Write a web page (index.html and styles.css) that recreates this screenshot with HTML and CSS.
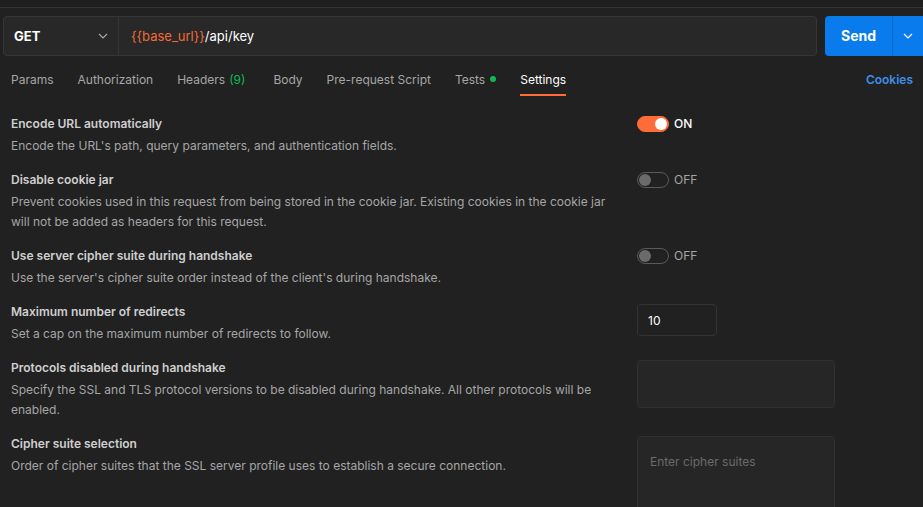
FILE: index.html
```html
<!DOCTYPE html>
<html>
<head>
<meta charset="utf-8">
<link rel="stylesheet" href="styles.css">
</head>
<body>
<div class="app">
  <div class="topline"></div>
  <div class="urlrow">
    <div class="urlbar">
      <div class="method">
        <span class="method-name">GET</span>
        <svg class="chev" width="10" height="6" viewBox="0 0 10 6"><path d="M1 1l4 4 4-4" fill="none" stroke="#a6a6a6" stroke-width="1.2"/></svg>
      </div>
      <div class="url"><span class="var">{{base_url}}</span>/api/key</div>
    </div>
    <div class="send">
      <span class="send-label">Send</span>
      <span class="send-arrow"><svg width="10" height="6" viewBox="0 0 10 6"><path d="M1 1l4 4 4-4" fill="none" stroke="#ffffff" stroke-width="1.2"/></svg></span>
    </div>
  </div>
  <div class="tabs">
    <div class="tab">Params</div>
    <div class="tab">Authorization</div>
    <div class="tab tab-headers">Headers <span class="count">(9)</span></div>
    <div class="tab">Body</div>
    <div class="tab">Pre-request Script</div>
    <div class="tab">Tests <span class="dot"></span></div>
    <div class="tab active">Settings</div>
    <div class="spacer"></div>
    <div class="cookies">Cookies</div>
  </div>
  <div class="settings">
    <div class="row">
      <div class="info">
        <div class="title">Encode URL automatically</div>
        <div class="desc">Encode the URL's path, query parameters, and authentication fields.</div>
      </div>
      <div class="control"><span class="toggle on"><span class="knob"></span></span><span class="tlabel on">ON</span></div>
    </div>
    <div class="row">
      <div class="info">
        <div class="title">Disable cookie jar</div>
        <div class="desc">Prevent cookies used in this request from being stored in the cookie jar. Existing cookies in the cookie jar will not be added as headers for this request.</div>
      </div>
      <div class="control"><span class="toggle"><span class="knob"></span></span><span class="tlabel">OFF</span></div>
    </div>
    <div class="row">
      <div class="info">
        <div class="title">Use server cipher suite during handshake</div>
        <div class="desc">Use the server's cipher suite order instead of the client's during handshake.</div>
      </div>
      <div class="control"><span class="toggle"><span class="knob"></span></span><span class="tlabel">OFF</span></div>
    </div>
    <div class="row">
      <div class="info">
        <div class="title">Maximum number of redirects</div>
        <div class="desc">Set a cap on the maximum number of redirects to follow.</div>
      </div>
      <div class="control"><div class="numbox">10</div></div>
    </div>
    <div class="row">
      <div class="info">
        <div class="title">Protocols disabled during handshake</div>
        <div class="desc">Specify the SSL and TLS protocol versions to be disabled during handshake. All other protocols will be enabled.</div>
      </div>
      <div class="control"><div class="selectbox"></div></div>
    </div>
    <div class="row">
      <div class="info">
        <div class="title">Cipher suite selection</div>
        <div class="desc">Order of cipher suites that the SSL server profile uses to establish a secure connection.</div>
      </div>
      <div class="control"><div class="cipherbox"><span class="placeholder">Enter cipher suites</span></div></div>
    </div>
  </div>
</div>
</body>
</html>
```
FILE: styles.css
```css
html, body {
  margin: 0;
  padding: 0;
  background: #212121;
  overflow: hidden;
}
body {
  font-family: Inter, "Noto Sans", sans-serif;
  color: #a6a6a6;
  width: 923px;
  height: 507px;
}
.app {
  display: flex;
  flex-direction: column;
}
.topline {
  height: 7px;
  border-bottom: 1px solid #333333;
  background: #1f1f1f;
}
.urlrow {
  display: flex;
  margin-top: 8px;
  padding-left: 3px;
  gap: 8px;
}
.urlbar {
  flex: 0 0 812px;
  height: 38px;
  display: flex;
  background: #282828;
  border: 1px solid #363636;
  border-radius: 4px;
  box-sizing: content-box;
}
.method {
  padding-left: 10px;
  display: flex;
  align-items: center;
  justify-content: space-between;
  padding-right: 10px;
  border-right: 1px solid #363636;
  box-sizing: border-box;
  flex: 0 0 115px;
}
.method-name {
  color: #ffffff;
  font-weight: 700;
  font-size: 13px;
}
.url {
  display: flex;
  align-items: center;
  padding-left: 12px;
  font-size: 13px;
  color: #ffffff;
}
.var {
  color: #f26b3a;
}
.send {
  flex: 1;
  height: 40px;
  background: #097bed;
  border-radius: 4px 0 0 4px;
  display: flex;
  align-items: center;
}
.send-label {
  width: 67px;
  text-align: center;
  color: #ffffff;
  font-weight: 700;
  font-size: 14px;
  border-right: 1px solid #0a6bd0;
  height: 40px;
  line-height: 40px;
}
.send-arrow {
  width: 30px;
  display: flex;
  justify-content: center;
}
.tabs {
  display: flex;
  align-items: stretch;
  height: 40px;
  padding-left: 11px;
  padding-right: 10px;
  gap: 24px;
  font-size: 12px;
}
.tab {
  display: flex;
  align-items: center;
  color: #a6a6a6;
  border-bottom: 2px solid transparent;
  padding-top: 8px;
}
.tab-headers {
  margin-right: 4px;
}
.count {
  color: #0cbb52;
  margin-left: 4px;
}
.dot {
  width: 6px;
  height: 6px;
  border-radius: 50%;
  background: #0cbb52;
  margin-left: 5px;
}
.tab.active {
  color: #ffffff;
  border-bottom-color: #ff6c37;
}
.spacer {
  flex: 1;
}
.cookies {
  display: flex;
  align-items: center;
  padding-top: 8px;
  padding-bottom: 2px;
  color: #3d8fe8;
  font-weight: 600;
}
.settings {
  padding: 18px 0 0 11px;
  display: flex;
  flex-direction: column;
  gap: 14px;
}
.row {
  display: flex;
  gap: 24px;
}
.info {
  flex: 0 0 602px;
}
.title {
  font-size: 12px;
  font-weight: 600;
  color: #cfcfcf;
  line-height: 20px;
  margin-bottom: 2px;
}
.desc {
  font-size: 12px;
  line-height: 20px;
  color: #a6a6a6;
}
.control {
  display: flex;
  align-items: flex-start;
  padding-top: 2px;
}
.toggle {
  width: 32px;
  height: 16px;
  border-radius: 8px;
  box-sizing: border-box;
  border: 1px solid #5a5a5a;
  position: relative;
}
.toggle .knob {
  position: absolute;
  top: 1px;
  left: 1px;
  width: 12px;
  height: 12px;
  border-radius: 50%;
  background: #6b6b6b;
}
.toggle.on {
  background: #ff6c37;
  border-color: #ff6c37;
}
.toggle.on .knob {
  left: auto;
  right: 1px;
  background: #ffffff;
}
.tlabel {
  margin-left: 5px;
  font-size: 12px;
  line-height: 16px;
  color: #a6a6a6;
}
.tlabel.on {
  color: #ffffff;
  font-weight: 500;
}
.numbox {
  width: 80px;
  height: 32px;
  box-sizing: border-box;
  border: 1px solid #333333;
  border-radius: 4px;
  padding-left: 10px;
  font-size: 12px;
  color: #ffffff;
  line-height: 32px;
}
.selectbox {
  width: 198px;
  height: 48px;
  box-sizing: border-box;
  background: #262626;
  border: 1px solid #303030;
  border-radius: 4px;
}
.cipherbox {
  width: 198px;
  height: 90px;
  box-sizing: border-box;
  background: #262626;
  border: 1px solid #303030;
  border-radius: 4px;
  padding: 13px 12px;
}
.placeholder {
  font-size: 12px;
  color: #6b6b6b;
}
```
